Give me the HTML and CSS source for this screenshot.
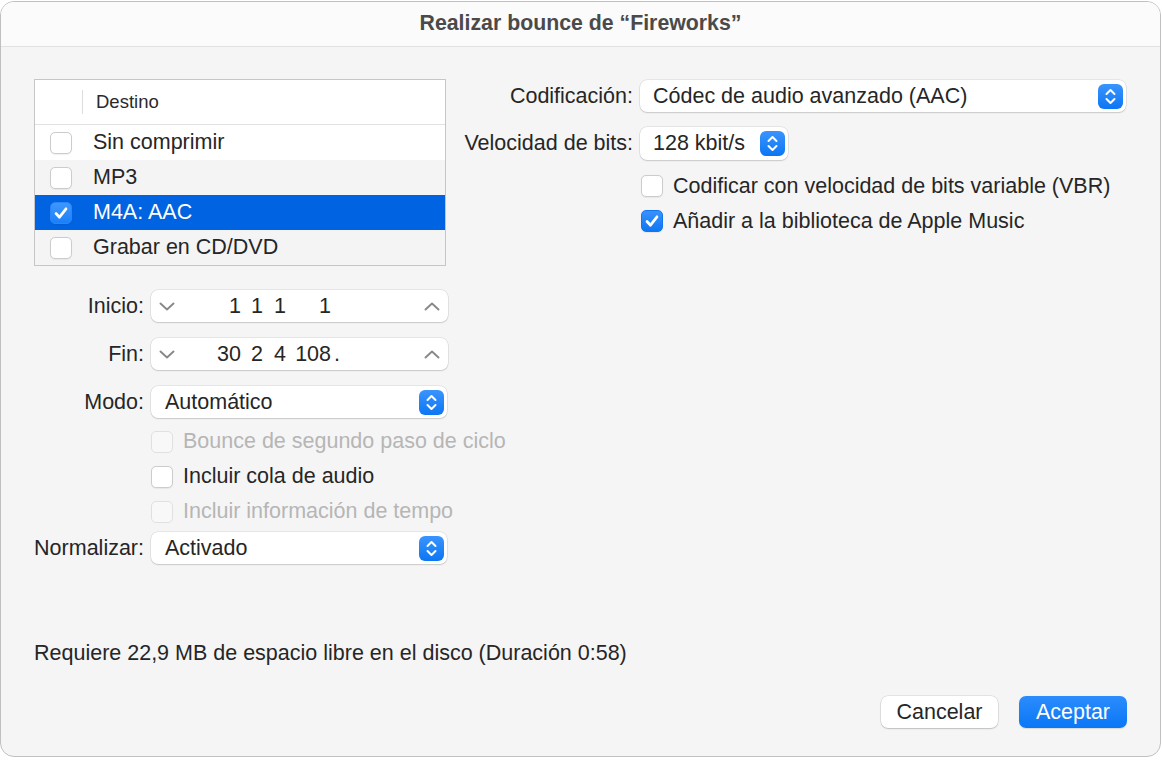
FILE: index.html
```html
<!DOCTYPE html>
<html lang="es">
<head>
<meta charset="utf-8">
<title>Realizar bounce de “Fireworks”</title>
<link rel="stylesheet" href="styles.css">
</head>
<body>
<div class="window">
  <header class="titlebar">Realizar bounce de “Fireworks”</header>

  <main class="content">
    <section class="left-col">
      <div class="dest-table">
        <div class="thead">
          <span class="col-sep"></span>
          <span class="th">Destino</span>
        </div>
        <div class="trow">
          <span class="cb"></span>
          <span class="tcell">Sin comprimir</span>
        </div>
        <div class="trow alt">
          <span class="cb"></span>
          <span class="tcell">MP3</span>
        </div>
        <div class="trow selected">
          <span class="cb on">
            <svg width="22" height="22" viewBox="0 0 22 22"><path d="M6 11.5 L9.5 15.2 L16 6.8" fill="none" stroke="#fff" stroke-width="2.7" stroke-linecap="round" stroke-linejoin="round"/></svg>
          </span>
          <span class="tcell">M4A: AAC</span>
        </div>
        <div class="trow alt">
          <span class="cb"></span>
          <span class="tcell">Grabar en CD/DVD</span>
        </div>
      </div>

      <div class="frow first">
        <span class="flabel">Inicio:</span>
        <div class="stepper">
          <svg class="chev" width="16" height="9" viewBox="0 0 16 9"><path d="M1.5 1.5 L8 7.5 L14.5 1.5" fill="none" stroke="#888" stroke-width="1.9" stroke-linecap="round" stroke-linejoin="round"/></svg>
          <span class="seg bars">1</span>
          <span class="seg beats">1</span>
          <span class="seg divs">1</span>
          <span class="seg ticks">1</span>
          <span class="seg dot"></span>
          <svg class="chev up" width="16" height="9" viewBox="0 0 16 9"><path d="M1.5 7.5 L8 1.5 L14.5 7.5" fill="none" stroke="#888" stroke-width="1.9" stroke-linecap="round" stroke-linejoin="round"/></svg>
        </div>
      </div>

      <div class="frow gap">
        <span class="flabel">Fin:</span>
        <div class="stepper">
          <svg class="chev" width="16" height="9" viewBox="0 0 16 9"><path d="M1.5 1.5 L8 7.5 L14.5 1.5" fill="none" stroke="#888" stroke-width="1.9" stroke-linecap="round" stroke-linejoin="round"/></svg>
          <span class="seg bars">30</span>
          <span class="seg beats">2</span>
          <span class="seg divs">4</span>
          <span class="seg ticks">108</span>
          <span class="seg dot">.</span>
          <svg class="chev up" width="16" height="9" viewBox="0 0 16 9"><path d="M1.5 7.5 L8 1.5 L14.5 7.5" fill="none" stroke="#888" stroke-width="1.9" stroke-linecap="round" stroke-linejoin="round"/></svg>
        </div>
      </div>

      <div class="frow gap">
        <span class="flabel">Modo:</span>
        <div class="popup wide-left">
          <span class="popup-text">Automático</span>
          <span class="popup-arrow">
            <svg width="25" height="25" viewBox="0 0 25 25"><path d="M8.5 10 L12.5 6 L16.5 10 M8.5 15 L12.5 19 L16.5 15" fill="none" stroke="#fff" stroke-width="2" stroke-linecap="round" stroke-linejoin="round"/></svg>
          </span>
        </div>
      </div>

      <div class="crow first-check disabled">
        <span class="cb"></span>
        <span class="ctext">Bounce de segundo paso de ciclo</span>
      </div>
      <div class="crow">
        <span class="cb"></span>
        <span class="ctext">Incluir cola de audio</span>
      </div>
      <div class="crow disabled">
        <span class="cb"></span>
        <span class="ctext">Incluir información de tempo</span>
      </div>

      <div class="frow last">
        <span class="flabel">Normalizar:</span>
        <div class="popup wide-left">
          <span class="popup-text">Activado</span>
          <span class="popup-arrow">
            <svg width="25" height="25" viewBox="0 0 25 25"><path d="M8.5 10 L12.5 6 L16.5 10 M8.5 15 L12.5 19 L16.5 15" fill="none" stroke="#fff" stroke-width="2" stroke-linecap="round" stroke-linejoin="round"/></svg>
          </span>
        </div>
      </div>
    </section>

    <section class="right-col">
      <div class="orow enc">
        <span class="olabel">Codificación:</span>
        <div class="popup enc-popup">
          <span class="popup-text">Códec de audio avanzado (AAC)</span>
          <span class="popup-arrow">
            <svg width="25" height="25" viewBox="0 0 25 25"><path d="M8.5 10 L12.5 6 L16.5 10 M8.5 15 L12.5 19 L16.5 15" fill="none" stroke="#fff" stroke-width="2" stroke-linecap="round" stroke-linejoin="round"/></svg>
          </span>
        </div>
      </div>
      <div class="orow rate">
        <span class="olabel">Velocidad de bits:</span>
        <div class="popup rate-popup">
          <span class="popup-text">128 kbit/s</span>
          <span class="popup-arrow">
            <svg width="25" height="25" viewBox="0 0 25 25"><path d="M8.5 10 L12.5 6 L16.5 10 M8.5 15 L12.5 19 L16.5 15" fill="none" stroke="#fff" stroke-width="2" stroke-linecap="round" stroke-linejoin="round"/></svg>
          </span>
        </div>
      </div>
      <div class="ocheck vbr">
        <span class="cb"></span>
        <span class="ctext">Codificar con velocidad de bits variable (VBR)</span>
      </div>
      <div class="ocheck music">
        <span class="cb on">
          <svg width="22" height="22" viewBox="0 0 22 22"><path d="M6 11.5 L9.5 15.2 L16 6.8" fill="none" stroke="#fff" stroke-width="2.7" stroke-linecap="round" stroke-linejoin="round"/></svg>
        </span>
        <span class="ctext">Añadir a la biblioteca de Apple Music</span>
      </div>
    </section>
  </main>

  <footer class="footer">
    <p class="disk-info">Requiere 22,9 MB de espacio libre en el disco (Duración 0:58)</p>
    <div class="actions">
      <button class="btn btn-cancel" type="button">Cancelar</button>
      <button class="btn btn-ok" type="button">Aceptar</button>
    </div>
  </footer>
</div>
</body>
</html>
```

FILE: styles.css
```css
* {
  box-sizing: border-box;
}

html,
body {
  margin: 0;
  background: #ffffff;
}

body {
  font-family: "Liberation Sans", Arial, sans-serif;
  font-size: 21.5px;
  color: #262626;
}

/* dialog frame */
.window {
  width: 1161px;
  height: 756px;
  margin-top: 1px;
  border: 1px solid #c0c0c0;
  border-radius: 14px;
  background: #f5f5f5;
  display: flex;
  flex-direction: column;
  overflow: hidden;
}

.titlebar {
  flex: none;
  height: 45px;
  padding-bottom: 2px;
  background: #fbfbfb;
  border-bottom: 1px solid #e2e2e2;
  display: flex;
  align-items: center;
  justify-content: center;
  font-weight: bold;
  font-size: 21.3px;
  color: #4a4a4a;
}

.content {
  display: grid;
  grid-template-columns: 426px 1fr;
  padding: 32px 34px 0 33px;
}

/* destination list */
.dest-table {
  width: 412px;
  border: 1px solid #c6c6c6;
  background: #ffffff;
}

.thead {
  height: 45px;
  border-bottom: 1px solid #e2e2e2;
  display: flex;
  align-items: center;
}

.col-sep {
  width: 1px;
  height: 24px;
  margin-left: 47px;
  background: #dddddd;
}

.th {
  margin-left: 13px;
  font-size: 18.5px;
  color: #2a2a2a;
}

.trow {
  height: 35px;
  display: flex;
  align-items: center;
  padding-left: 15px;
  background: #ffffff;
}

.trow.alt {
  background: #f4f4f4;
}

.trow.selected {
  background: #0063e1;
  color: #ffffff;
}

.tcell {
  margin-left: 21px;
  white-space: nowrap;
}

/* checkboxes */
.cb {
  flex: none;
  width: 22px;
  height: 22px;
  border-radius: 5px;
  background: #ffffff;
  border: 1px solid #cccccc;
  box-shadow: 0 0.5px 1px rgba(0, 0, 0, 0.06);
  display: flex;
  align-items: center;
  justify-content: center;
}

.cb svg {
  display: block;
  margin: -1px;
}

.cb.on {
  border-color: #1476ee;
  background: linear-gradient(#3892fd, #0d77f4);
}

.trow.selected .cb.on {
  border-color: #2a86f8;
  background: linear-gradient(#3f97fd, #1a80f8);
}

.disabled .cb {
  background: #f8f8f8;
  border-color: #e0e0e0;
  box-shadow: none;
}

.disabled .ctext {
  color: #b6b6b6;
}

.ctext {
  margin-left: 10px;
  white-space: nowrap;
}

/* left form */
.frow {
  height: 32px;
  display: flex;
  align-items: center;
}

.frow.first {
  margin-top: 24px;
}

.frow.gap {
  margin-top: 16px;
}

.frow.last {
  margin-top: 3px;
}

.flabel {
  flex: none;
  width: 110px;
  margin-right: 7px;
  text-align: right;
  white-space: nowrap;
}

.crow {
  height: 35px;
  padding-left: 117px;
  display: flex;
  align-items: center;
}

.crow.first-check {
  margin-top: 6px;
}

/* position stepper */
.stepper {
  width: 297px;
  height: 32px;
  background: #ffffff;
  border-radius: 7px;
  box-shadow: 0 0 0 0.5px rgba(0, 0, 0, 0.13), 0 1px 1.5px rgba(0, 0, 0, 0.13);
  display: flex;
  align-items: center;
  padding: 0 8px;
}

.chev {
  flex: none;
  display: block;
}

.chev.up {
  margin-left: auto;
}

.seg {
  flex: none;
  text-align: right;
  white-space: pre;
}

.seg.bars {
  width: 66px;
}

.seg.beats {
  width: 22px;
}

.seg.divs {
  width: 23px;
}

.seg.ticks {
  width: 45px;
}

.seg.dot {
  width: 10px;
  padding-left: 3px;
  text-align: left;
}

/* pop-up buttons */
.popup {
  height: 32px;
  background: #ffffff;
  border-radius: 7px;
  box-shadow: 0 0 0 0.5px rgba(0, 0, 0, 0.13), 0 1px 1.5px rgba(0, 0, 0, 0.13);
  display: flex;
  align-items: center;
  padding: 0 3px 0 13px;
}

.popup.wide-left {
  width: 296px;
  padding-left: 14px;
}

.popup-text {
  flex: 1;
  white-space: nowrap;
}

.popup-arrow {
  flex: none;
  width: 25px;
  height: 25px;
  border-radius: 6px;
  background: linear-gradient(#3a94fd, #0c76f3);
  display: flex;
}

.popup-arrow svg {
  display: block;
}

/* encoding options */
.orow {
  display: flex;
  align-items: center;
}

.orow.enc {
  height: 32px;
  margin-top: 1px;
}

.orow.rate {
  height: 33px;
  margin-top: 15px;
}

.olabel {
  flex: none;
  width: 173px;
  margin-right: 7px;
  text-align: right;
  white-space: nowrap;
}

.enc-popup {
  width: 486px;
}

.rate-popup {
  width: 148px;
  height: 33px;
}

.ocheck {
  height: 22px;
  padding-left: 181px;
  display: flex;
  align-items: center;
}

.ocheck.vbr {
  margin-top: 15px;
}

.ocheck.music {
  margin-top: 13px;
}

/* footer */
.footer {
  margin-top: auto;
  padding: 0 33px 28px 33px;
}

.disk-info {
  margin: 0;
  height: 24px;
  line-height: 24px;
  white-space: nowrap;
}

.actions {
  margin-top: 31px;
  display: flex;
  justify-content: flex-end;
  gap: 21px;
}

.btn {
  height: 32px;
  border: none;
  border-radius: 7px;
  font: inherit;
  padding: 0;
  display: flex;
  align-items: center;
  justify-content: center;
}

.btn-cancel {
  width: 117px;
  background: #ffffff;
  color: #262626;
  box-shadow: 0 0 0 0.5px rgba(0, 0, 0, 0.14), 0 1px 1.5px rgba(0, 0, 0, 0.16);
}

.btn-ok {
  width: 108px;
  color: #ffffff;
  background: linear-gradient(#2b8cfd, #0a77f5);
  box-shadow: 0 0.5px 1px rgba(0, 0, 0, 0.12);
}
```
